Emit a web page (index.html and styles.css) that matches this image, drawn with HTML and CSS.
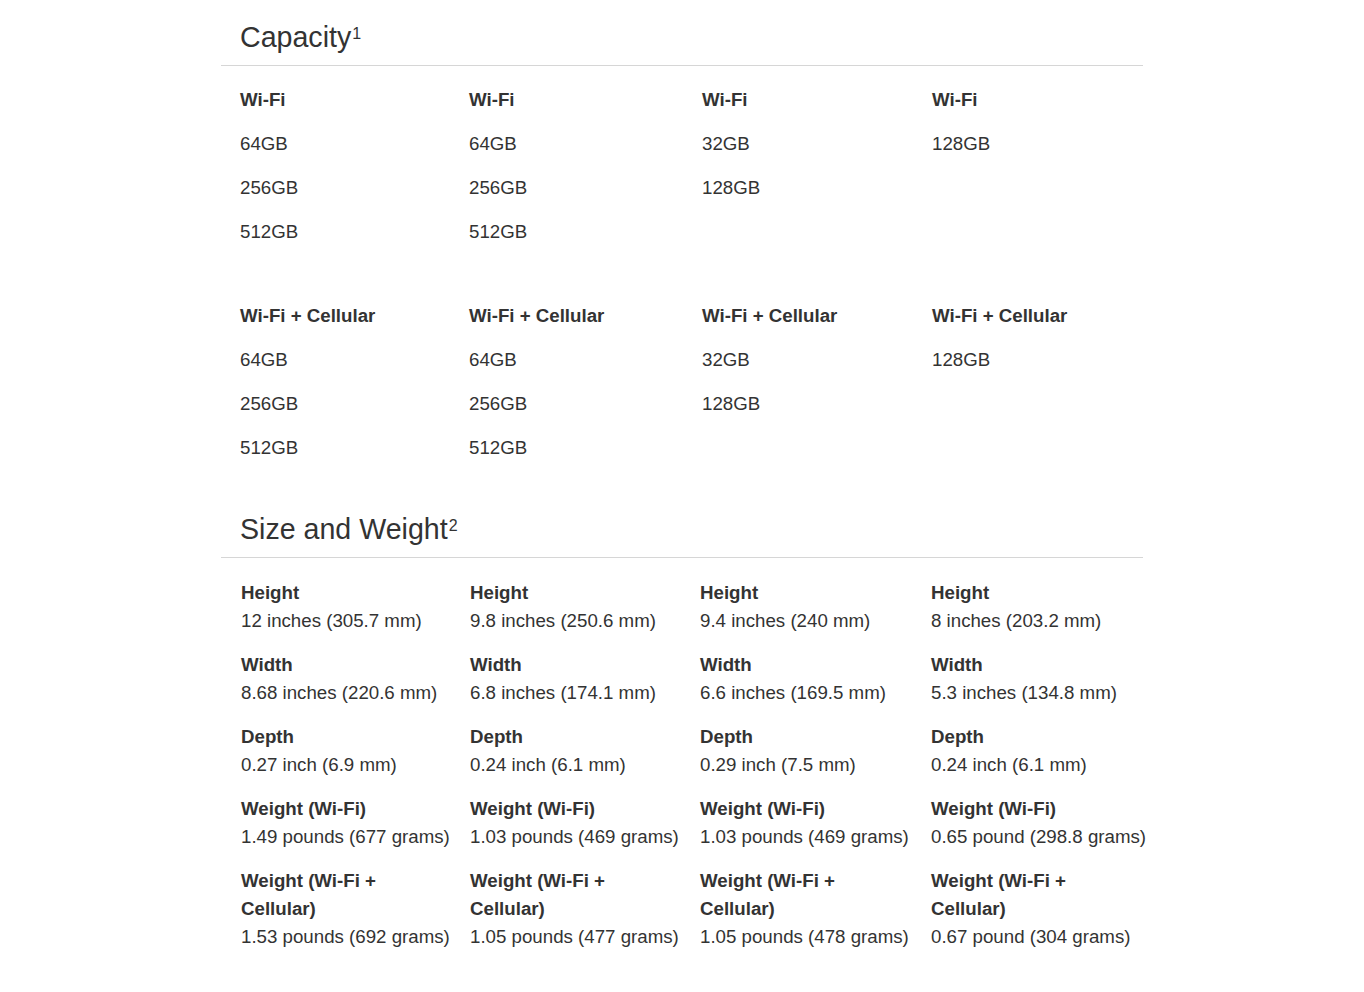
FILE: index.html
```html
<!DOCTYPE html>
<html lang="en">
<head>
<meta charset="utf-8">
<title>Tech Specs</title>
<link rel="stylesheet" href="styles.css">
</head>
<body>
<main class="specs">
  <section class="section">
    <h2 class="section-title">Capacity<sup class="fn">1</sup></h2>
    <div class="cap-grid">
      <ul class="cap-col"><li class="cap-head">Wi-Fi</li><li>64GB</li><li>256GB</li><li>512GB</li></ul>
      <ul class="cap-col"><li class="cap-head">Wi-Fi</li><li>64GB</li><li>256GB</li><li>512GB</li></ul>
      <ul class="cap-col"><li class="cap-head">Wi-Fi</li><li>32GB</li><li>128GB</li></ul>
      <ul class="cap-col"><li class="cap-head">Wi-Fi</li><li>128GB</li></ul>
    </div>
    <div class="cap-grid cap-grid-second">
      <ul class="cap-col"><li class="cap-head">Wi-Fi + Cellular</li><li>64GB</li><li>256GB</li><li>512GB</li></ul>
      <ul class="cap-col"><li class="cap-head">Wi-Fi + Cellular</li><li>64GB</li><li>256GB</li><li>512GB</li></ul>
      <ul class="cap-col"><li class="cap-head">Wi-Fi + Cellular</li><li>32GB</li><li>128GB</li></ul>
      <ul class="cap-col"><li class="cap-head">Wi-Fi + Cellular</li><li>128GB</li></ul>
    </div>
  </section>

  <section class="section section-size">
    <h2 class="section-title">Size and Weight<sup class="fn">2</sup></h2>
    <div class="size-grid">
      <dl class="size-col">
        <div class="spec"><dt>Height</dt><dd>12 inches (305.7 mm)</dd></div>
        <div class="spec"><dt>Width</dt><dd>8.68 inches (220.6 mm)</dd></div>
        <div class="spec"><dt>Depth</dt><dd>0.27 inch (6.9 mm)</dd></div>
        <div class="spec"><dt>Weight (Wi-Fi)</dt><dd>1.49 pounds (677 grams)</dd></div>
        <div class="spec"><dt>Weight (Wi-Fi + Cellular)</dt><dd>1.53 pounds (692 grams)</dd></div>
      </dl>
      <dl class="size-col">
        <div class="spec"><dt>Height</dt><dd>9.8 inches (250.6 mm)</dd></div>
        <div class="spec"><dt>Width</dt><dd>6.8 inches (174.1 mm)</dd></div>
        <div class="spec"><dt>Depth</dt><dd>0.24 inch (6.1 mm)</dd></div>
        <div class="spec"><dt>Weight (Wi-Fi)</dt><dd>1.03 pounds (469 grams)</dd></div>
        <div class="spec"><dt>Weight (Wi-Fi + Cellular)</dt><dd>1.05 pounds (477 grams)</dd></div>
      </dl>
      <dl class="size-col">
        <div class="spec"><dt>Height</dt><dd>9.4 inches (240 mm)</dd></div>
        <div class="spec"><dt>Width</dt><dd>6.6 inches (169.5 mm)</dd></div>
        <div class="spec"><dt>Depth</dt><dd>0.29 inch (7.5 mm)</dd></div>
        <div class="spec"><dt>Weight (Wi-Fi)</dt><dd>1.03 pounds (469 grams)</dd></div>
        <div class="spec"><dt>Weight (Wi-Fi + Cellular)</dt><dd>1.05 pounds (478 grams)</dd></div>
      </dl>
      <dl class="size-col">
        <div class="spec"><dt>Height</dt><dd>8 inches (203.2 mm)</dd></div>
        <div class="spec"><dt>Width</dt><dd>5.3 inches (134.8 mm)</dd></div>
        <div class="spec"><dt>Depth</dt><dd>0.24 inch (6.1 mm)</dd></div>
        <div class="spec"><dt>Weight (Wi-Fi)</dt><dd>0.65 pound (298.8 grams)</dd></div>
        <div class="spec"><dt>Weight (Wi-Fi + Cellular)</dt><dd>0.67 pound (304 grams)</dd></div>
      </dl>
    </div>
  </section>
</main>
</body>
</html>
```

FILE: styles.css
```css
html, body {
  margin: 0;
  padding: 0;
  background: #ffffff;
}

body {
  font-family: "Liberation Sans", Arial, Helvetica, sans-serif;
  color: #333333;
  -webkit-font-smoothing: antialiased;
}

.specs {
  width: 922px;
  margin-left: 221px;
}

.section-title {
  margin: 0;
  padding: 19px 0 10px 19px;
  font-size: 28.6px;
  line-height: 36px;
  font-weight: 400;
  color: #333333;
  border-bottom: 1px solid #d6d6d6;
}

.fn {
  font-size: 16px;
  line-height: 0;
  vertical-align: 8px;
  margin-left: 1px;
}

.cap-grid {
  display: grid;
  grid-template-columns: 229px 233px 230px 230px;
  margin-top: 12px;
  padding-left: 19px;
}

.cap-grid-second {
  margin-top: 40px;
}

.cap-col {
  list-style: none;
  margin: 0;
  padding: 0;
  font-size: 18.7px;
  line-height: 44px;
}

.cap-head {
  font-weight: 700;
}

.section-size {
  margin-top: 22px;
}

.size-grid {
  display: grid;
  grid-template-columns: 229px 230px 231px 230px;
  margin-top: 21px;
  padding-left: 20px;
}

.size-col {
  margin: 0;
  display: flex;
  flex-direction: column;
  gap: 16px;
  font-size: 18.7px;
  line-height: 28px;
}

.spec dt {
  font-weight: 700;
  max-width: 190px;
}

.spec dd {
  margin: 0;
  white-space: nowrap;
}
```
